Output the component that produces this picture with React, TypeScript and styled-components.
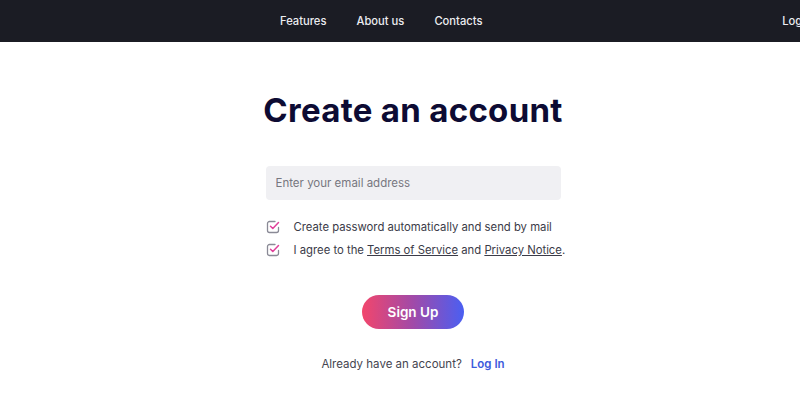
import React from 'react';
import styled, { createGlobalStyle } from 'styled-components';

const GlobalStyle = createGlobalStyle`
  html, body {
    margin: 0;
    padding: 0;
    background: #ffffff;
    overflow: hidden;
  }
  body {
    font-family: Inter, "Noto Sans", sans-serif;
  }
`;

const Page = styled.div`
  width: 826px;
  min-height: 402px;
`;

const Header = styled.header`
  height: 42px;
  background: #1b1c24;
  display: flex;
  align-items: center;
  padding: 0 11px 0 280px;
  box-sizing: border-box;
`;

const NavLinks = styled.nav`
  display: flex;
  gap: 30px;
`;

const NavLink = styled.a`
  color: #ececf0;
  font-size: 11.2px;
  font-weight: 500;
  text-decoration: none;
  white-space: nowrap;
`;

const LoginLink = styled(NavLink)`
  margin-left: auto;
`;

const Main = styled.main`
  display: flex;
  flex-direction: column;
  align-items: center;
  padding-top: 48px;
`;

const Title = styled.h1`
  margin: 0;
  font-size: 33px;
  font-weight: 700;
  color: #0d0b33;
  letter-spacing: 0.3px;
  line-height: 40px;
`;

const Form = styled.form`
  width: 295px;
  margin-top: 36px;
  display: flex;
  flex-direction: column;
`;

const EmailInput = styled.input`
  height: 34px;
  border: none;
  border-radius: 4px;
  background: #f0f0f3;
  padding: 0 10px;
  font-family: inherit;
  font-size: 11.5px;
  color: #333;
  outline: none;
  &::placeholder {
    color: #77777f;
  }
`;

const Checks = styled.div`
  margin-top: 19px;
  display: flex;
  flex-direction: column;
  gap: 7px;
`;

const CheckRow = styled.label`
  display: flex;
  align-items: center;
  gap: 14px;
  font-size: 11.3px;
  color: #3b3b48;
  line-height: 16px;
  white-space: nowrap;
  svg {
    flex-shrink: 0;
  }
`;

const TextLink = styled.a`
  color: #3b3b48;
  text-decoration: underline;
`;

const SignUp = styled.button`
  margin-top: 37px;
  width: 102px;
  height: 34px;
  border: none;
  border-radius: 17px;
  background: linear-gradient(90deg, #f2466c 0%, #a14aa8 50%, #4a5ff2 100%);
  color: #fff;
  font-family: inherit;
  font-size: 13.5px;
  font-weight: 600;
  cursor: pointer;
`;

const Footer = styled.p`
  margin: 28px 0 0;
  font-size: 11.5px;
  color: #45454f;
  white-space: nowrap;
`;

const BlueLink = styled.a`
  color: #3d5bdc;
  font-weight: 600;
  text-decoration: none;
  margin-left: 9px;
`;

const CheckIcon = () => (
  <svg width="14" height="14" viewBox="0 0 14 14" fill="none">
    <path
      d="M9 1.5H3.5a2 2 0 0 0-2 2v7a2 2 0 0 0 2 2h7a2 2 0 0 0 2-2V7.5"
      stroke="#8a8a96"
      strokeWidth="1.3"
      strokeLinecap="round"
    />
    <path
      d="M4.5 6.2l2.3 2.3L12.5 2.5"
      stroke="#e0409a"
      strokeWidth="1.5"
      strokeLinecap="round"
      strokeLinejoin="round"
    />
  </svg>
);

export default function App() {
  return (
    <Page>
      <GlobalStyle />
      <Header>
        <NavLinks>
          <NavLink href="#">Features</NavLink>
          <NavLink href="#">About us</NavLink>
          <NavLink href="#">Contacts</NavLink>
        </NavLinks>
        <LoginLink href="#">Log In</LoginLink>
      </Header>
      <Main>
        <Title>Create an account</Title>
        <Form onSubmit={(e) => e.preventDefault()}>
          <EmailInput type="email" placeholder="Enter your email address" />
          <Checks>
            <CheckRow>
              <CheckIcon />
              Create password automatically and send by mail
            </CheckRow>
            <CheckRow>
              <CheckIcon />
              <span>
                I agree to the <TextLink href="#">Terms of Service</TextLink> and{' '}
                <TextLink href="#">Privacy Notice</TextLink>.
              </span>
            </CheckRow>
          </Checks>
        </Form>
        <SignUp>Sign Up</SignUp>
        <Footer>
          Already have an account?<BlueLink href="#">Log In</BlueLink>
        </Footer>
      </Main>
    </Page>
  );
}
